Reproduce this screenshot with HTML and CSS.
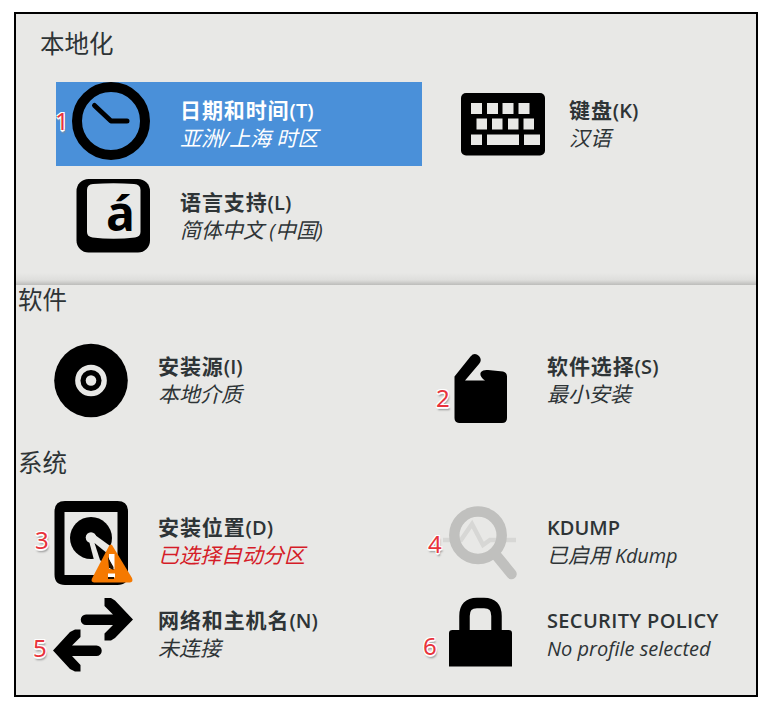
FILE: index.html
```html
<!DOCTYPE html>
<html lang="zh-CN">
<head>
<meta charset="utf-8">
<title>安装信息摘要</title>
<link rel="stylesheet" href="styles.css">
</head>
<body>
<main class="panel">
  <section class="pinned">
    <h2 class="heading heading-pinned">本地化</h2>
    <div class="grid grid-pinned">
      <div class="item selected">
        <svg class="icon" viewBox="0 0 124 84"><circle cx="55" cy="39" r="34" fill="none" stroke="#000" stroke-width="10"/><path d="M38.5 23.5L55 39H71" fill="none" stroke="#000" stroke-width="5" stroke-linecap="round" stroke-linejoin="round"/></svg>
        <div class="text"><div class="title">日期和时间<span class="key">(T)</span></div><div class="status">亚洲<span class="lat">/</span>上海<span class="lat"> </span>时区</div></div>
        <span class="badge b1">1</span>
      </div>
      <div class="item">
        <svg class="icon" viewBox="0 0 124 84"><rect x="16" y="11" width="84" height="62.5" rx="5"/><g fill="#e8e8e6"><rect x="26" y="21" width="11" height="11"/><rect x="42" y="21" width="11" height="11"/><rect x="57.500" y="21" width="11" height="11"/><rect x="73.500" y="21" width="11" height="11"/><rect x="31.500" y="36.500" width="10.500" height="11"/><rect x="47" y="36.500" width="10.500" height="11"/><rect x="63" y="36.500" width="10.500" height="11"/><rect x="78.500" y="36.500" width="10.500" height="11"/><rect x="26" y="52.500" width="11" height="10.500"/><rect x="42" y="52.500" width="32" height="10.500"/><rect x="79" y="52.500" width="16" height="10.500"/></g></svg>
        <div class="text"><div class="title">键盘<span class="key">(K)</span></div><div class="status">汉语</div></div>
      </div>
      <div class="item">
        <svg class="icon" viewBox="0 0 124 84"><rect x="20.500" y="5" width="73.500" height="73.500" rx="12"/><path d="M37 10Q57.500 8.500 78 10Q84.500 10.500 84.500 16V58Q84.500 62.500 79 63.500Q57.500 66 36.500 63.500Q31 62.500 31 58V16Q31 10.500 37 10Z" fill="#e8e8e6"/><text class="glyph" x="50" y="57">á</text></svg>
        <div class="text"><div class="title">语言支持<span class="key">(L)</span></div><div class="status">简体中文<span class="lat"> (</span>中国<span class="lat">)</span></div></div>
      </div>
    </div>
  </section>
  <section class="scroll">
    <h2 class="heading">软件</h2>
    <div class="grid grid-software">
      <div class="item">
        <svg class="icon" viewBox="0 0 124 84"><circle cx="57" cy="42.500" r="36.800"/><circle cx="57" cy="42.500" r="13.200" fill="none" stroke="#e8e8e6" stroke-width="5.300"/><circle cx="57" cy="42.500" r="5.300" fill="#e8e8e6"/></svg>
        <div class="text"><div class="title">安装源<span class="key">(I)</span></div><div class="status">本地介质</div></div>
      </div>
      <div class="item">
        <svg class="icon" viewBox="0 0 124 84"><path d="M31.500 38.500L47.500 18.500Q51.500 14 56 18Q59.500 22 56 26L42 42.500H62L60 41Q56 37 58 34Q60 31.500 65 32L80 33.500Q84 34.500 84 38.500V80Q84 85 79 85H36Q31.500 84.500 31.500 80Z"/></svg>
        <div class="text"><div class="title">软件选择<span class="key">(S)</span></div><div class="status">最小安装</div></div>
        <span class="badge b2">2</span>
      </div>
    </div>
    <h2 class="heading">系统</h2>
    <div class="grid grid-system">
      <div class="item">
        <svg class="icon" viewBox="0 0 124 88"><path fill-rule="evenodd" d="M31 2H83.500Q94 2 94 12.500V75.500Q94 86 83.500 86H31Q20.500 86 20.500 75.500V12.500Q20.500 2 31 2ZM30.500 13V76H83.500V13Z"/><circle cx="57" cy="39" r="21"/><circle cx="57" cy="38.500" r="5.300" fill="#e8e8e6"/><path d="M54.500 40L60 61L63 68L82 60L79 49L61 36Z" fill="#e8e8e6"/><path d="M60.500 44L66 61L78 72L79 59Z"/><path d="M78 46L98 79Q99.500 83 96 83.500H60Q56.500 83 58 79.500L75 47Q76.500 44.500 78 46Z" fill="#f57900"/><path d="M75 55H80.500V70H75ZM74 74.500H81V78.500H74Z" fill="#fff"/><path d="M74 58L79.500 68V71L75 69ZM74 78H80V80H74Z" fill="#211100"/><path d="M75.500 56H80V66Q78 66 75.500 60Z" fill="#fff"/></svg>
        <div class="text"><div class="title">安装位置<span class="key">(D)</span></div><div class="status alert">已选择自动分区</div></div>
        <span class="badge b3">3</span>
      </div>
      <div class="item">
        <svg class="icon" viewBox="0 0 124 88"><path d="M20 41H38L49 25L60 46L67 41H93" fill="none" stroke="#d7d7d5" stroke-width="4.500"/><circle cx="55" cy="36.300" r="23.700" fill="none" stroke="#c0c0be" stroke-width="10.500"/><path d="M73 56L88.500 75" fill="none" stroke="#c0c0be" stroke-width="10.500" stroke-linecap="round"/></svg>
        <div class="text"><div class="title"><span class="caps">KDUMP</span></div><div class="status">已启用<span class="lat kd"> Kdump</span></div></div>
        <span class="badge b4">4</span>
      </div>
      <div class="item">
        <svg class="icon" viewBox="0 0 124 84"><path d="M70.500 6H77L81 8.500L99 27.500L81 46L77 48.500H70.500V41.500L79 33H52A5.250 5.250 0 0 1 52 22.500H79L70.500 14Z"/><path d="M46.500 37.500H41L36 40L19 58.500L36 77L41 79.500H46.500V73L38 64H62.500A5.250 5.250 0 0 0 62.500 53.500H38L46.500 45Z"/></svg>
        <div class="text"><div class="title">网络和主机名<span class="key">(N)</span></div><div class="status">未连接</div></div>
        <span class="badge b5">5</span>
      </div>
      <div class="item">
        <svg class="icon" viewBox="0 0 124 84"><path d="M26 74.500V41Q26 38 29.500 38H85.500Q89 38 89 41V74.500Z"/><path d="M41.500 42V24Q41.500 11 54 11H61Q73.500 11 73.500 24V42" fill="none" stroke="#000" stroke-width="10.500"/></svg>
        <div class="text"><div class="title"><span class="caps policy">SECURITY POLICY</span></div><div class="status"><span class="lat">No profile selected</span></div></div>
        <span class="badge b6">6</span>
      </div>
    </div>
  </section>
</main>
</body>
</html>
```
FILE: styles.css
```css
* { box-sizing: border-box; }
body {
  margin: 0;
  padding: 12px 14px 10px;
  background: #fff;
  font-family: "Open Sans", "Noto Sans CJK SC", sans-serif;
  color: #2e3436;
}
.panel {
  width: 744px;
  height: 685px;
  border: 2px solid #000;
  background: #e8e8e6;
  overflow: hidden;
}
.pinned {
  height: 271px;
  padding-top: 12px;
  background: linear-gradient(to bottom, transparent 259px, #dededc 266px, #bcbcba 271px);
}
.heading {
  margin: 0;
  padding-left: 2px;
  height: 34px;
  line-height: 34px;
  font-family: "Noto Sans CJK SC", sans-serif;
  font-size: 24.5px;
  font-weight: 400;
}
.heading-pinned { padding-left: 24px; }
.grid {
  display: grid;
  grid-template-columns: 366px 300px;
  column-gap: 23px;
  padding-left: 18px;
}
.grid-pinned { grid-auto-rows: 84px; row-gap: 8px; padding: 22px 0 0 40px; }
.grid-software { padding-top: 21px; height: 131px; }
.grid-system { grid-auto-rows: 84px; row-gap: 9px; padding-top: 19px; }
.scroll { height: 410px; }
.scroll .heading { height: 32px; line-height: 28px; }
.item { position: relative; display: flex; height: 84px; }
.icon { flex: none; width: 124px; height: auto; align-self: flex-start; overflow: visible; }
.glyph { font: 700 48px "Open Sans", sans-serif; }
.text { padding-top: 13px; white-space: nowrap; }
.title, .status {
  height: 28px;
  line-height: 28px;
  font-family: "Noto Sans CJK SC", sans-serif;
}
.title { font-size: 21px; font-weight: 700; letter-spacing: 0.9px; }
.status { font-size: 21px; font-style: italic; }
.key, .caps, .lat { font-family: "Open Sans", sans-serif; }
.key { font-size: 20px; font-weight: 600; letter-spacing: 0.1px; }
.caps { font-size: 20px; font-weight: 600; letter-spacing: 0; }
.policy { letter-spacing: 0.35px; }
.lat { font-size: 20px; }
.kd { letter-spacing: -0.2px; }
.selected { background: #4a90d9; color: #fff; }
.alert { color: #d51c28; }
.badge {
  position: absolute;
  font: 400 24px/28px "Noto Sans", sans-serif;
  color: #e8333c;
  text-shadow: -1px -1px 0 #fff, 1px -1px 0 #fff, -1px 1px 0 #fff, 1px 1px 0 #fff, 0 2px 1px #fff, 1px 3px 2px #888;
}
.b1 { left: -1px; top: 25px; }
.b2 { left: 13px; top: 46px; }
.b3 { left: 1px; top: 27px; }
.b4 { left: 5px; top: 31px; }
.b5 { left: -1px; top: 42px; }
.b6 { left: 0; top: 40px; }
```
